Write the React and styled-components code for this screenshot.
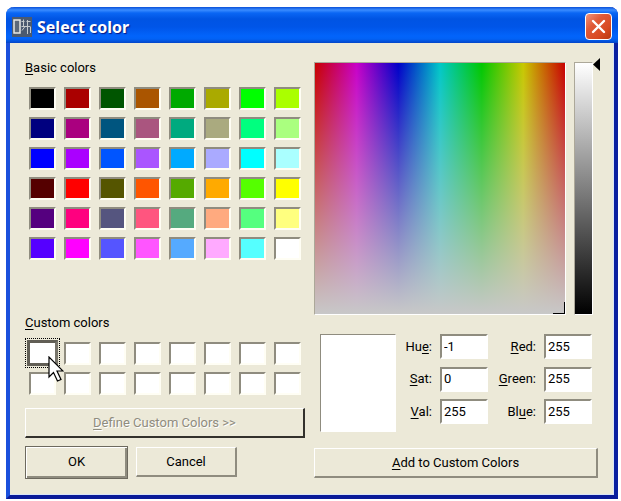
import React, { useState } from "react";
import styled, { createGlobalStyle, css } from "styled-components";

const face = "#ece9d8";
const shade = "#8f8c7f";
const uiFont = '"Roboto", "Liberation Sans", sans-serif';

const Page = createGlobalStyle`
  * { box-sizing: border-box; }
  body {
    margin: 0;
    padding: 7px 3px 3px 6px;
    background: #fff;
    color: #000;
    font: 13px/16px ${uiFont};
  }
  button, input { font: inherit; color: inherit; }
`;

const Dialog = styled.main`
  border: 4px solid;
  border-color: #0a3fd8 #0a1fa0 #0a1a98 #1a50dc;
  border-top: 0;
  border-radius: 8px 8px 0 0;
  background: ${face};
`;

const TitleBar = styled.header`
  display: flex;
  align-items: center;
  gap: 5px;
  height: 36px;
  margin: 0 -4px;
  padding: 3px 6px 0 6px;
  border-radius: 8px 8px 0 0;
  background: linear-gradient(#0a50d8 0, #3a8cff 3px, #0a66f4 6px, #0054e3 12px, #0055e8 20px, #0264fb 29px, #0262f6 32px, #0345c8 36px);
`;

const Title = styled.h1`
  flex: 1;
  margin: 0;
  color: #fff;
  font: bold 16px/20px "Noto Sans", sans-serif;
  text-shadow: 1px 1px 1px #0a1883;
`;

const CloseButton = styled.button`
  display: grid;
  place-items: center;
  width: 27px;
  height: 27px;
  padding: 0;
  border: 1px solid #fff;
  border-radius: 4px;
  background: linear-gradient(135deg, #f0947c, #e05a38 35%, #d84a22 70%, #b8380f);
`;

const Body = styled.div`
  display: grid;
  grid-template-columns: 280px minmax(0, 1fr);
  column-gap: 9px;
  padding: 15px 15px 15px 15px;
  border: solid #d8e4f8;
  border-width: 0 1px 1px 0;
`;

const Column = styled.div`
  display: flex;
  flex-direction: column;
`;

const Caption = styled.h2`
  margin: 0;
  padding: 2px 0 7px;
  font: inherit;
`;

const Wells = styled.div`
  display: grid;
  grid-template-columns: repeat(8, 1fr);
  grid-auto-rows: 30px;
`;

const Cell = styled.div`
  position: relative;
  display: grid;
  place-items: center;
  ${(p) => p.$focused && css`outline: 1px dotted #000; outline-offset: -1px;`}
`;

const Well = styled.button`
  width: 27px;
  height: 23px;
  padding: 0;
  border: 2px solid;
  border-color: ${shade} #fffef4 #fffef4 ${shade};
  background: ${(p) => p.$fill};
  outline: none;
  ${(p) => p.$selected && css`
    width: 31px;
    height: 26px;
    border: 3px solid #615e55;
    border-right-color: #77746a;
  `}
`;

const Pointer = styled.svg`
  position: absolute;
  z-index: 1;
  left: 23px;
  top: 18px;
  pointer-events: none;
`;

const Spacer = styled.div`
  height: ${(p) => p.$size}px;
`;

const Buttons = styled.div`
  display: flex;
  align-items: center;
  gap: 8px;
  height: 34px;
`;

const PushButton = styled.button`
  width: ${(p) => p.$width || "100%"};
  height: 30px;
  padding: 0;
  border: solid;
  border-width: 1px 2px 2px 1px;
  border-color: #fff ${shade} ${shade} #fff;
  background: ${face};
  ${(p) => p.$default && css`
    height: 33px;
    border: 1px solid #6d6a5f;
    box-shadow: inset 1px 1px #fff, inset -2px -2px ${shade};
  `}
  &:disabled {
    color: #8f8c7f;
    border-color: #fff #33312c #33312c #fff;
    text-shadow: 1px 1px #fff;
  }
`;

const Pickers = styled.div`
  display: flex;
  gap: 8px;
  height: 253px;
  margin-top: 4px;
`;

const Spectrum = styled.div`
  position: relative;
  flex: 1;
  border: 1px solid;
  border-color: #aca899 #fff #fff #aca899;
  background:
    linear-gradient(rgba(200, 200, 200, 0), #c8c8c8),
    linear-gradient(90deg, #c80000, #c800c8, #0000c8, #00c8c8, #00c800, #c8c800, #c80000);
`;

const Cross = styled.div`
  position: absolute;
  right: 0;
  bottom: 0;
  width: 12px;
  height: 12px;
  border: solid #000;
  border-width: 0 1px 1px 0;
`;

const ValueBar = styled.div`
  position: relative;
  width: 19px;
  margin-right: 5px;
  border: 1px solid;
  border-color: #aca899 #fff #fff #aca899;
  background: linear-gradient(#fff, #000);
`;

const ValueSlider = styled.input`
  position: absolute;
  top: -5px;
  left: 0;
  width: 25px;
  height: 263px;
  margin: 0;
  appearance: none;
  writing-mode: vertical-lr;
  direction: rtl;
  background: none;
  &::-webkit-slider-thumb {
    appearance: none;
    width: 7px;
    height: 13px;
    margin-left: 18px;
    background: #000;
    clip-path: polygon(100% 0, 100% 100%, 0 50%);
  }
`;

const Values = styled.div`
  display: flex;
  height: 98px;
  margin: 19px 6px 16px 6px;
`;

const Preview = styled.div`
  flex: 1;
  border: 1px solid;
  border-color: ${shade} #fff #fff ${shade};
  background: #fff;
`;

const Fields = styled.div`
  display: grid;
  grid-template-columns: 36px 48px 40px 48px;
  column-gap: 8px;
  align-content: space-between;
  align-items: center;
  padding-bottom: 8px;
`;

const FieldLabel = styled.label`
  text-align: right;
  white-space: nowrap;
`;

const NumberBox = styled.input`
  width: 100%;
  height: 25px;
  padding: 0 2px 1px;
  border: 2px solid;
  border-color: ${shade} #fff #fff ${shade};
  border-radius: 0;
  background: #fff;
`;

const Key = styled.u`
  text-underline-offset: 2px;
`;

const hex = (n) => n.toString(16).padStart(2, "0");
const basicColors = Array.from({ length: 48 }, (_, i) => {
  const col = i % 8;
  const row = Math.floor(i / 8);
  const red = (col % 2) * 170 + (row > 2 ? 85 : 0);
  const green = Math.floor(col / 2) * 85;
  const blue = [0, 127, 255][row % 3];
  return `#${hex(red)}${hex(green)}${hex(blue)}`;
});
const customColors = Array(16).fill("#ffffff");

const fields = [
  { id: "hue", before: "Hu", key: "e", after: ":", value: "-1" },
  { id: "red", before: "", key: "R", after: "ed:", value: "255" },
  { id: "sat", before: "", key: "S", after: "at:", value: "0" },
  { id: "green", before: "", key: "G", after: "reen:", value: "255" },
  { id: "val", before: "", key: "V", after: "al:", value: "255" },
  { id: "blue", before: "Bl", key: "u", after: "e:", value: "255" },
];

function AppIcon() {
  return (
    <svg width="20" height="20" viewBox="0 0 20 20" aria-hidden="true">
      <rect width="20" height="20" fill="#4b5a70" />
      <path d="M2 3h6v13H2z" fill="#5d6979" stroke="#e8e8e4" strokeWidth="1.5" />
      <path d="M9.500 4.500h3M9.500 9.500h9M11.500 2.500v7M14.500 4.500h4M15.500 3v14M10 13.500l3-4M18.500 10v6" fill="none" stroke="#c5cacc" />
    </svg>
  );
}

export default function App() {
  const [selected, setSelected] = useState(0);
  return (
    <>
      <Page />
      <Dialog>
        <TitleBar>
          <AppIcon />
          <Title>Select color</Title>
          <CloseButton aria-label="Close">
            <svg width="15" height="15" viewBox="0 0 15 15" aria-hidden="true">
              <path d="M2 2l11 11M13 2L2 13" stroke="#fff" strokeWidth="2.4" strokeLinecap="round" />
            </svg>
          </CloseButton>
        </TitleBar>
        <Body>
          <Column>
            <Caption><Key>B</Key>asic colors</Caption>
            <Wells>
              {basicColors.map((c) => (
                <Cell key={c}><Well $fill={c} aria-label={c} /></Cell>
              ))}
            </Wells>
            <Spacer $size={50} />
            <Caption><Key>C</Key>ustom colors</Caption>
            <Wells>
              {customColors.map((c, i) => (
                <Cell key={i} $focused={i === selected}>
                  <Well
                    $fill={c}
                    $selected={i === selected}
                    aria-label={`Custom color ${i + 1}`}
                    onClick={() => setSelected(i)}
                  />
                  {i === 0 && (
                    <Pointer width="16" height="27" viewBox="0 0 16 27" aria-hidden="true">
                      <path d="M1 1v20l4.500-4.500 4 8.500 3.500-1.500-4-8.500h6z" fill="#fff" stroke="#000" strokeWidth="1.200" />
                    </Pointer>
                  )}
                </Cell>
              ))}
            </Wells>
            <Spacer $size={10} />
            <PushButton disabled><Key>D</Key>efine Custom Colors &gt;&gt;</PushButton>
            <Spacer $size={7} />
            <Buttons>
              <PushButton $width="103px" $default>OK</PushButton>
              <PushButton $width="101px">Cancel</PushButton>
            </Buttons>
          </Column>
          <Column>
            <Pickers>
              <Spectrum><Cross /></Spectrum>
              <ValueBar>
                <ValueSlider type="range" min="0" max="255" defaultValue="255" aria-label="Value" />
              </ValueBar>
            </Pickers>
            <Values>
              <Preview />
              <Fields>
                {fields.map((f) => (
                  <React.Fragment key={f.id}>
                    <FieldLabel htmlFor={f.id}>{f.before}<Key>{f.key}</Key>{f.after}</FieldLabel>
                    <NumberBox id={f.id} defaultValue={f.value} />
                  </React.Fragment>
                ))}
              </Fields>
            </Values>
            <PushButton><Key>A</Key>dd to Custom Colors</PushButton>
          </Column>
        </Body>
      </Dialog>
    </>
  );
}
